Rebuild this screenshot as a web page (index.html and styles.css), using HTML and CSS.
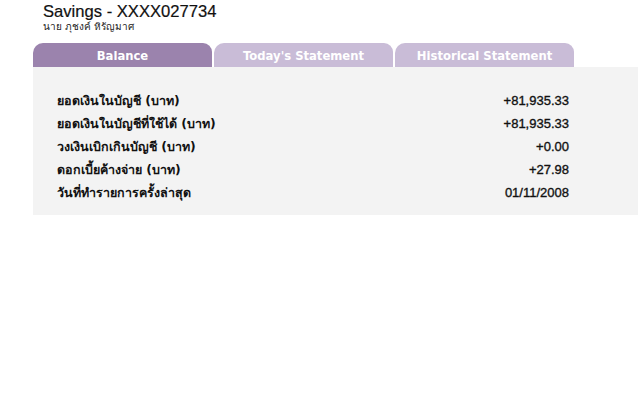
FILE: index.html
```html
<!DOCTYPE html>
<html>
<head>
<meta charset="utf-8">
<link rel="stylesheet" href="styles.css">
</head>
<body>
<div class="page">
  <div class="header">
    <div class="title">Savings - XXXX027734</div>
    <div class="owner">นาย ภุชงค์ หิรัญมาศ</div>
  </div>
  <div class="tabs">
    <div class="tab active">Balance</div>
    <div class="tab">Today's Statement</div>
    <div class="tab">Historical Statement</div>
  </div>
  <div class="panel">
    <div class="row"><span class="label">ยอดเงินในบัญชี (บาท)</span><span class="value">+81,935.33</span></div>
    <div class="row"><span class="label">ยอดเงินในบัญชีที่ใช้ได้ (บาท)</span><span class="value">+81,935.33</span></div>
    <div class="row"><span class="label">วงเงินเบิกเกินบัญชี (บาท)</span><span class="value">+0.00</span></div>
    <div class="row"><span class="label">ดอกเบี้ยค้างจ่าย (บาท)</span><span class="value">+27.98</span></div>
    <div class="row"><span class="label">วันที่ทำรายการครั้งล่าสุด</span><span class="value">01/11/2008</span></div>
  </div>
</div>
</body>
</html>
```
FILE: styles.css
```css
html, body { margin: 0; padding: 0; background: #fff; }
.page { padding: 2px 2px 0 33px; width: 605px; }
.header { padding-left: 10px; height: 41px; }
.title { font-family: "Liberation Sans", Arial, sans-serif; font-size: 16.6px; color: #111; line-height: 19px; -webkit-text-stroke: 0.2px #111; }
.owner { font-family: "DejaVu Sans", "Noto Sans", sans-serif; font-size: 10px; color: #222; line-height: 12px; }
.tabs { display: flex; height: 24px; }
.tab { width: 179px; margin-right: 2px; background: #c9bcd7; color: #fff; font-family: "DejaVu Sans", Verdana, sans-serif; font-weight: bold; font-size: 11.6px; line-height: 26px; text-align: center; border-radius: 10px 9px 0 0; }
.tab.active { background: #9b83ad; }
.panel { background: #f3f3f3; padding: 22px 0 18px 24px; height: 108px; }
.row { display: flex; align-items: center; height: 23px; }
.label { width: 300px; font-family: "DejaVu Sans", Tahoma, sans-serif; font-weight: bold; font-size: 12.5px; color: #111; }
.value { width: 212px; text-align: right; font-family: "Liberation Sans", Arial, sans-serif; font-size: 13px; color: #111; -webkit-text-stroke: 0.35px #111; }
```
